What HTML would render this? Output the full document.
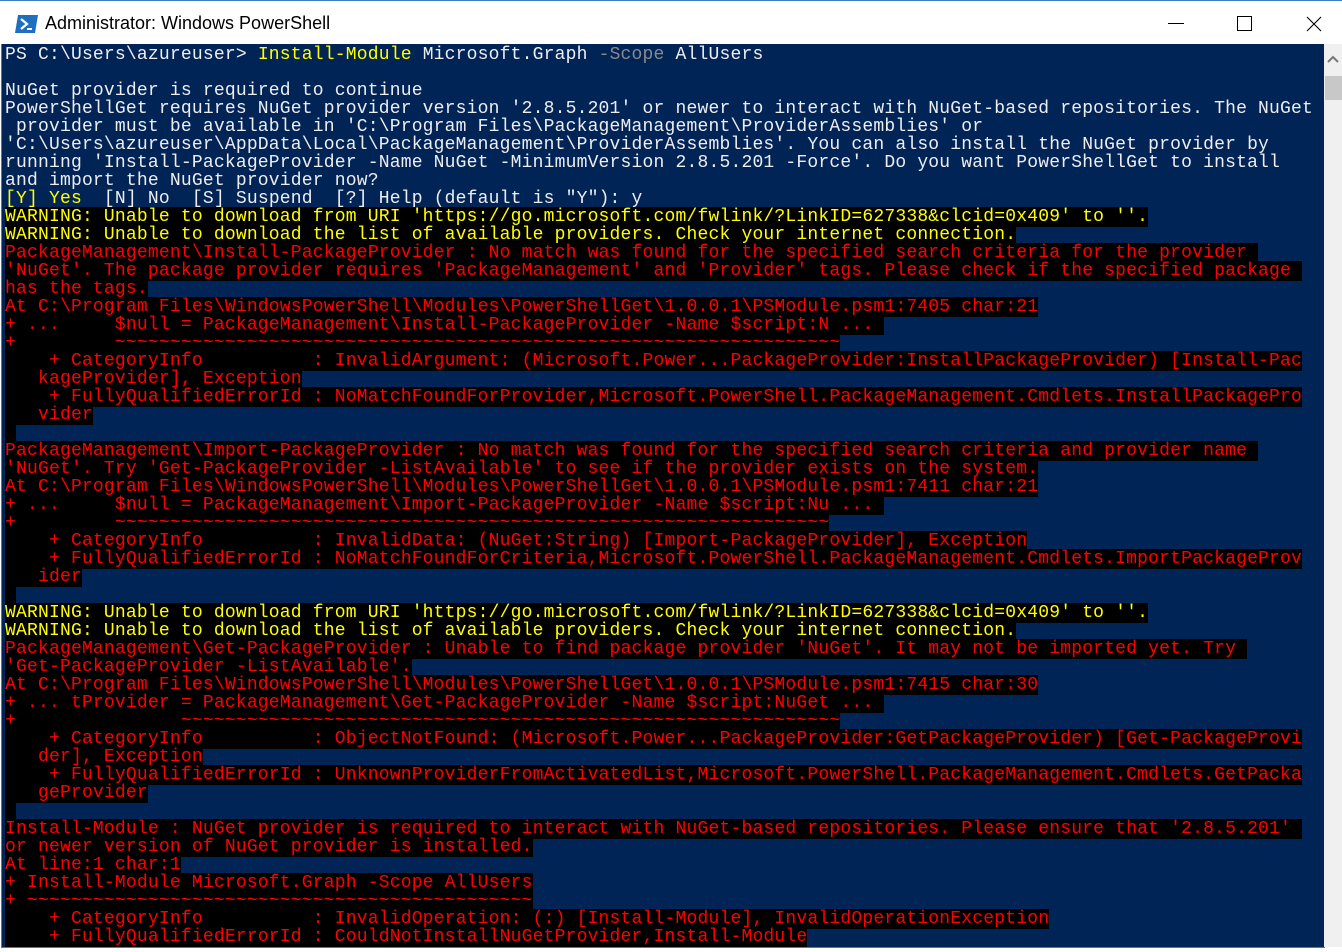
<!DOCTYPE html>
<html><head><meta charset="utf-8"><style>
html,body{margin:0;padding:0;width:1342px;height:952px;overflow:hidden;background:#fff;}
.tb{position:absolute;left:0;top:0;width:1342px;height:44px;background:#fff;border-top:1px solid #3c7fc4;box-sizing:border-box;}
.tt{position:absolute;left:45px;top:12px;font:18px "Liberation Sans",sans-serif;color:#000;}
.con{position:absolute;left:1px;top:44px;width:1323px;height:903px;background:#012456;border-left:1px solid #3c7fc4;border-bottom:1px solid #3c7fc4;overflow:hidden;}
.txt{position:absolute;left:3px;top:2px;font:18px/18px "Liberation Mono",monospace;letter-spacing:0.19px;color:#eeedf0;white-space:normal;}
.txt div{height:18px;white-space:pre;}
.y{color:#ffff00}
.w{color:#ffff00;background:#000}
.e{color:#ff0000;background:#000}
.g{color:#8a8a8a}
.sb{position:absolute;left:1324px;top:44px;width:18px;height:903px;background:#f0f0f0;}
</style></head><body>
<div class="tb">
<svg style="position:absolute;left:15px;top:13px" width="24" height="20" viewBox="0 0 24 20"><polygon points="3,1 23,1 20,19 0,19" fill="#1e6fc0"/><polyline points="6,5 12,10 6,15" fill="none" stroke="#fff" stroke-width="2.2"/><line x1="12" y1="15" x2="17" y2="15" stroke="#fff" stroke-width="2"/></svg>
<div class="tt">Administrator: Windows PowerShell</div>
<div style="position:absolute;left:1168px;top:22px;width:16px;height:1px;background:#000"></div>
<div style="position:absolute;left:1237px;top:15px;width:13px;height:13px;border:1px solid #000"></div>
<svg style="position:absolute;left:1306px;top:15px" width="16" height="16"><path d="M1 1L15 15M15 1L1 15" stroke="#000" stroke-width="1.1"/></svg>
</div>
<div class="con"><div class="txt"><div>PS C:\Users\azureuser&gt; <span class="y">Install-Module</span> Microsoft.Graph <span class="g">-Scope</span> AllUsers</div><div></div><div>NuGet provider is required to continue</div><div>PowerShellGet requires NuGet provider version '2.8.5.201' or newer to interact with NuGet-based repositories. The NuGet</div><div> provider must be available in 'C:\Program Files\PackageManagement\ProviderAssemblies' or</div><div>'C:\Users\azureuser\AppData\Local\PackageManagement\ProviderAssemblies'. You can also install the NuGet provider by</div><div>running 'Install-PackageProvider -Name NuGet -MinimumVersion 2.8.5.201 -Force'. Do you want PowerShellGet to install</div><div>and import the NuGet provider now?</div><div><span class="y">[Y] Yes</span>  [N] No  [S] Suspend  [?] Help (default is "Y"): y</div><div><span class="w">WARNING: Unable to download from URI 'https://go.microsoft.com/fwlink/?LinkID=627338&amp;clcid=0x409' to ''.</span></div><div><span class="w">WARNING: Unable to download the list of available providers. Check your internet connection.</span></div><div><span class="e">PackageManagement\Install-PackageProvider : No match was found for the specified search criteria for the provider </span></div><div><span class="e">'NuGet'. The package provider requires 'PackageManagement' and 'Provider' tags. Please check if the specified package </span></div><div><span class="e">has the tags.</span></div><div><span class="e">At C:\Program Files\WindowsPowerShell\Modules\PowerShellGet\1.0.0.1\PSModule.psm1:7405 char:21</span></div><div><span class="e">+ ...     $null = PackageManagement\Install-PackageProvider -Name $script:N ... </span></div><div><span class="e">+         ~~~~~~~~~~~~~~~~~~~~~~~~~~~~~~~~~~~~~~~~~~~~~~~~~~~~~~~~~~~~~~~~~~</span></div><div><span class="e">    + CategoryInfo          : InvalidArgument: (Microsoft.Power...PackageProvider:InstallPackageProvider) [Install-Pac</span></div><div><span class="e">   kageProvider], Exception</span></div><div><span class="e">    + FullyQualifiedErrorId : NoMatchFoundForProvider,Microsoft.PowerShell.PackageManagement.Cmdlets.InstallPackagePro</span></div><div><span class="e">   vider</span></div><div><span class="e"> </span></div><div><span class="e">PackageManagement\Import-PackageProvider : No match was found for the specified search criteria and provider name </span></div><div><span class="e">'NuGet'. Try 'Get-PackageProvider -ListAvailable' to see if the provider exists on the system.</span></div><div><span class="e">At C:\Program Files\WindowsPowerShell\Modules\PowerShellGet\1.0.0.1\PSModule.psm1:7411 char:21</span></div><div><span class="e">+ ...     $null = PackageManagement\Import-PackageProvider -Name $script:Nu ... </span></div><div><span class="e">+         ~~~~~~~~~~~~~~~~~~~~~~~~~~~~~~~~~~~~~~~~~~~~~~~~~~~~~~~~~~~~~~~~~</span></div><div><span class="e">    + CategoryInfo          : InvalidData: (NuGet:String) [Import-PackageProvider], Exception</span></div><div><span class="e">    + FullyQualifiedErrorId : NoMatchFoundForCriteria,Microsoft.PowerShell.PackageManagement.Cmdlets.ImportPackageProv</span></div><div><span class="e">   ider</span></div><div><span class="e"> </span></div><div><span class="w">WARNING: Unable to download from URI 'https://go.microsoft.com/fwlink/?LinkID=627338&amp;clcid=0x409' to ''.</span></div><div><span class="w">WARNING: Unable to download the list of available providers. Check your internet connection.</span></div><div><span class="e">PackageManagement\Get-PackageProvider : Unable to find package provider 'NuGet'. It may not be imported yet. Try </span></div><div><span class="e">'Get-PackageProvider -ListAvailable'.</span></div><div><span class="e">At C:\Program Files\WindowsPowerShell\Modules\PowerShellGet\1.0.0.1\PSModule.psm1:7415 char:30</span></div><div><span class="e">+ ... tProvider = PackageManagement\Get-PackageProvider -Name $script:NuGet ... </span></div><div><span class="e">+               ~~~~~~~~~~~~~~~~~~~~~~~~~~~~~~~~~~~~~~~~~~~~~~~~~~~~~~~~~~~~</span></div><div><span class="e">    + CategoryInfo          : ObjectNotFound: (Microsoft.Power...PackageProvider:GetPackageProvider) [Get-PackageProvi</span></div><div><span class="e">   der], Exception</span></div><div><span class="e">    + FullyQualifiedErrorId : UnknownProviderFromActivatedList,Microsoft.PowerShell.PackageManagement.Cmdlets.GetPacka</span></div><div><span class="e">   geProvider</span></div><div><span class="e"> </span></div><div><span class="e">Install-Module : NuGet provider is required to interact with NuGet-based repositories. Please ensure that '2.8.5.201' </span></div><div><span class="e">or newer version of NuGet provider is installed.</span></div><div><span class="e">At line:1 char:1</span></div><div><span class="e">+ Install-Module Microsoft.Graph -Scope AllUsers</span></div><div><span class="e">+ ~~~~~~~~~~~~~~~~~~~~~~~~~~~~~~~~~~~~~~~~~~~~~~</span></div><div><span class="e">    + CategoryInfo          : InvalidOperation: (:) [Install-Module], InvalidOperationException</span></div><div><span class="e">    + FullyQualifiedErrorId : CouldNotInstallNuGetProvider,Install-Module</span></div></div></div>
<div class="sb">
<svg style="position:absolute;left:3px;top:11px" width="12" height="8"><path d="M1 7L6 2L11 7" fill="none" stroke="#777" stroke-width="2"/></svg>
<div style="position:absolute;left:1px;top:32px;width:17px;height:24px;background:#c8c8c8"></div>
</div>
</body></html>
